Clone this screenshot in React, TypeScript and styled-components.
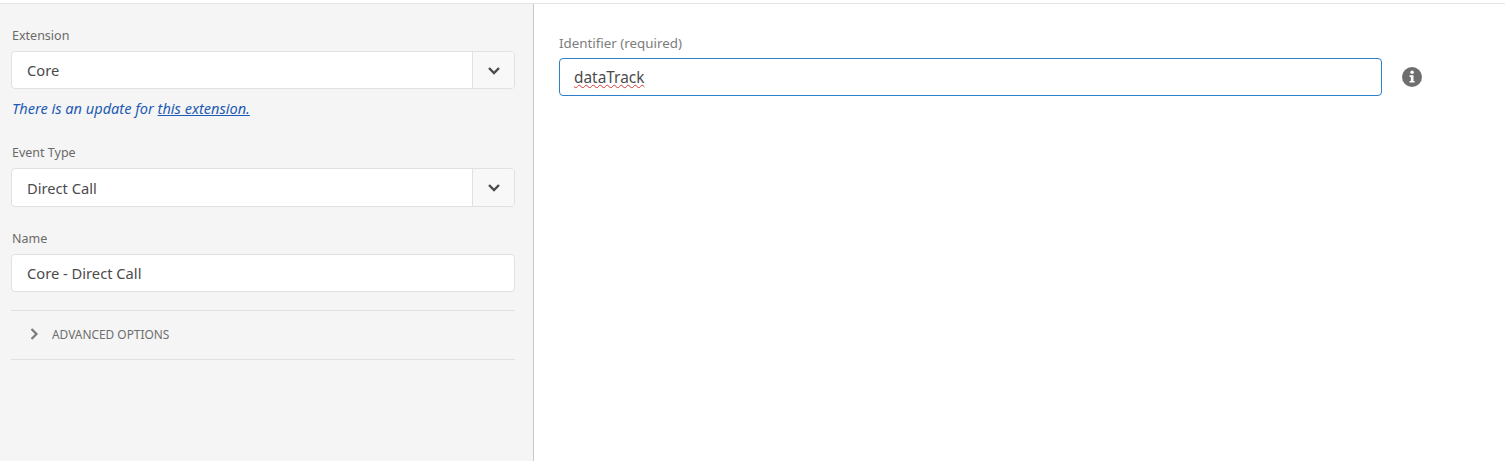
import React from "react";
import styled, { createGlobalStyle } from "styled-components";

const Global = createGlobalStyle`
  html, body { margin: 0; padding: 0; background: #fff; }
  #root { font-family: "Noto Sans", "Open Sans", sans-serif; }
`;

const Page = styled.div`
  width: 1505px;
  height: 461px;
  box-sizing: border-box;
  padding-top: 3px;
  overflow: hidden;
  display: flex;
  flex-direction: column;
`;

const TopRule = styled.div`
  height: 1px;
  background: #e4e4e4;
  flex: none;
`;

const Body = styled.div`
  flex: 1;
  display: flex;
  min-height: 0;
`;

const Sidebar = styled.aside`
  width: 534px;
  box-sizing: border-box;
  flex: none;
  background: #f5f5f5;
  border-right: 1px solid #c8c8c8;
  padding: 24px 18px 0 11px;
  display: flex;
  flex-direction: column;
`;

const Label = styled.label<{ $top?: number }>`
  display: block;
  font-size: 12.5px;
  line-height: 16px;
  color: #6a6a6a;
  margin: ${(p) => p.$top ?? 0}px 0 7px 1px;
`;

const FieldLabel = styled.label`
  display: block;
  font-size: 13.35px;
  line-height: 16px;
  color: #7d7d7d;
  margin-bottom: 7px;
`;

const SelectBox = styled.div<{ $h: number }>`
  display: flex;
  height: ${(p) => p.$h}px;
  box-sizing: border-box;
  border: 1px solid #e1e1e1;
  border-radius: 4px;
  background: #fff;
  overflow: hidden;
`;

const SelectValue = styled.div`
  flex: 1;
  display: flex;
  align-items: center;
  padding-left: 15px;
  font-size: 14.7px;
  color: #4b4b4b;
`;

const SelectButton = styled.div`
  width: 42px;
  flex: none;
  box-sizing: border-box;
  border-left: 1px solid #e1e1e1;
  background: #f8f8f8;
  display: flex;
  align-items: center;
  justify-content: center;
`;

const Hint = styled.p`
  margin: 9px 0 0 1px;
  font-size: 14.56px;
  line-height: 20px;
  font-style: italic;
  color: #1d5bb4;
  a { color: inherit; text-decoration: underline; }
`;

const TextBox = styled.div`
  height: 38px;
  box-sizing: border-box;
  border: 1px solid #e1e1e1;
  border-radius: 4px;
  background: #fff;
  display: flex;
  align-items: center;
  padding-left: 15px;
  font-size: 14.7px;
  color: #4b4b4b;
`;

const Disclosure = styled.div`
  margin-top: 18px;
  height: 50px;
  box-sizing: border-box;
  border-top: 1px solid #e1e1e1;
  border-bottom: 1px solid #e1e1e1;
  display: flex;
  align-items: center;
  gap: 13px;
  padding: 0 0 2px 19px;
  font-size: 11.9px;
  color: #6e6e6e;
`;

const Main = styled.main`
  flex: 1;
  padding: 31px 0 0 25px;
`;

const FieldRow = styled.div`
  display: flex;
  align-items: center;
  gap: 20px;
`;

const ActiveInput = styled.div`
  width: 823px;
  height: 38px;
  box-sizing: border-box;
  border: 1px solid #2d7fc9;
  border-radius: 4px;
  background: #fff;
  display: flex;
  align-items: center;
  padding-left: 14px;
  font-size: 15.4px;
  color: #4b4b4b;
`;

const Misspelled = styled.span`
  text-decoration: underline wavy #d33a3a 1px;
  text-underline-offset: 1px;
  text-decoration-skip-ink: none;
`;

const Chevron = () => (
  <svg width="14" height="9" viewBox="0 0 14 9" fill="none">
    <path d="M2 2l5 5 5-5" stroke="#4b4b4b" strokeWidth="2.4" />
  </svg>
);

const ChevronRight = () => (
  <svg width="9" height="12" viewBox="0 0 9 12" fill="none">
    <path d="M1.5 1l5 5-5 5" stroke="#7a7a7a" strokeWidth="2.2" />
  </svg>
);

const InfoIcon = () => (
  <svg width="20" height="20" viewBox="0 0 19 19">
    <circle cx="9.5" cy="9.5" r="9.5" fill="#6e6e6e" />
    <circle cx="9.6" cy="5" r="1.7" fill="#fff" />
    <path d="M7.2 7.8h3.7v5.4h1.1v1.6H7.2v-1.6h1.2V9.4H7.2z" fill="#fff" />
  </svg>
);

const Select = ({ value, h }: { value: string; h: number }) => (
  <SelectBox $h={h}>
    <SelectValue>{value}</SelectValue>
    <SelectButton>
      <Chevron />
    </SelectButton>
  </SelectBox>
);

export default function App() {
  return (
    <Page>
      <Global />
      <TopRule />
      <Body>
        <Sidebar>
          <Label>Extension</Label>
          <Select value="Core" h={38} />
          <Hint>
            There is an update for <a href="#">this extension.</a>
          </Hint>
          <Label $top={27}>Event Type</Label>
          <Select value="Direct Call" h={39} />
          <Label $top={24}>Name</Label>
          <TextBox>Core - Direct Call</TextBox>
          <Disclosure>
            <ChevronRight />
            ADVANCED OPTIONS
          </Disclosure>
        </Sidebar>
        <Main>
          <FieldLabel>Identifier (required)</FieldLabel>
          <FieldRow>
            <ActiveInput>
              <Misspelled>dataTrack</Misspelled>
            </ActiveInput>
            <InfoIcon />
          </FieldRow>
        </Main>
      </Body>
    </Page>
  );
}
